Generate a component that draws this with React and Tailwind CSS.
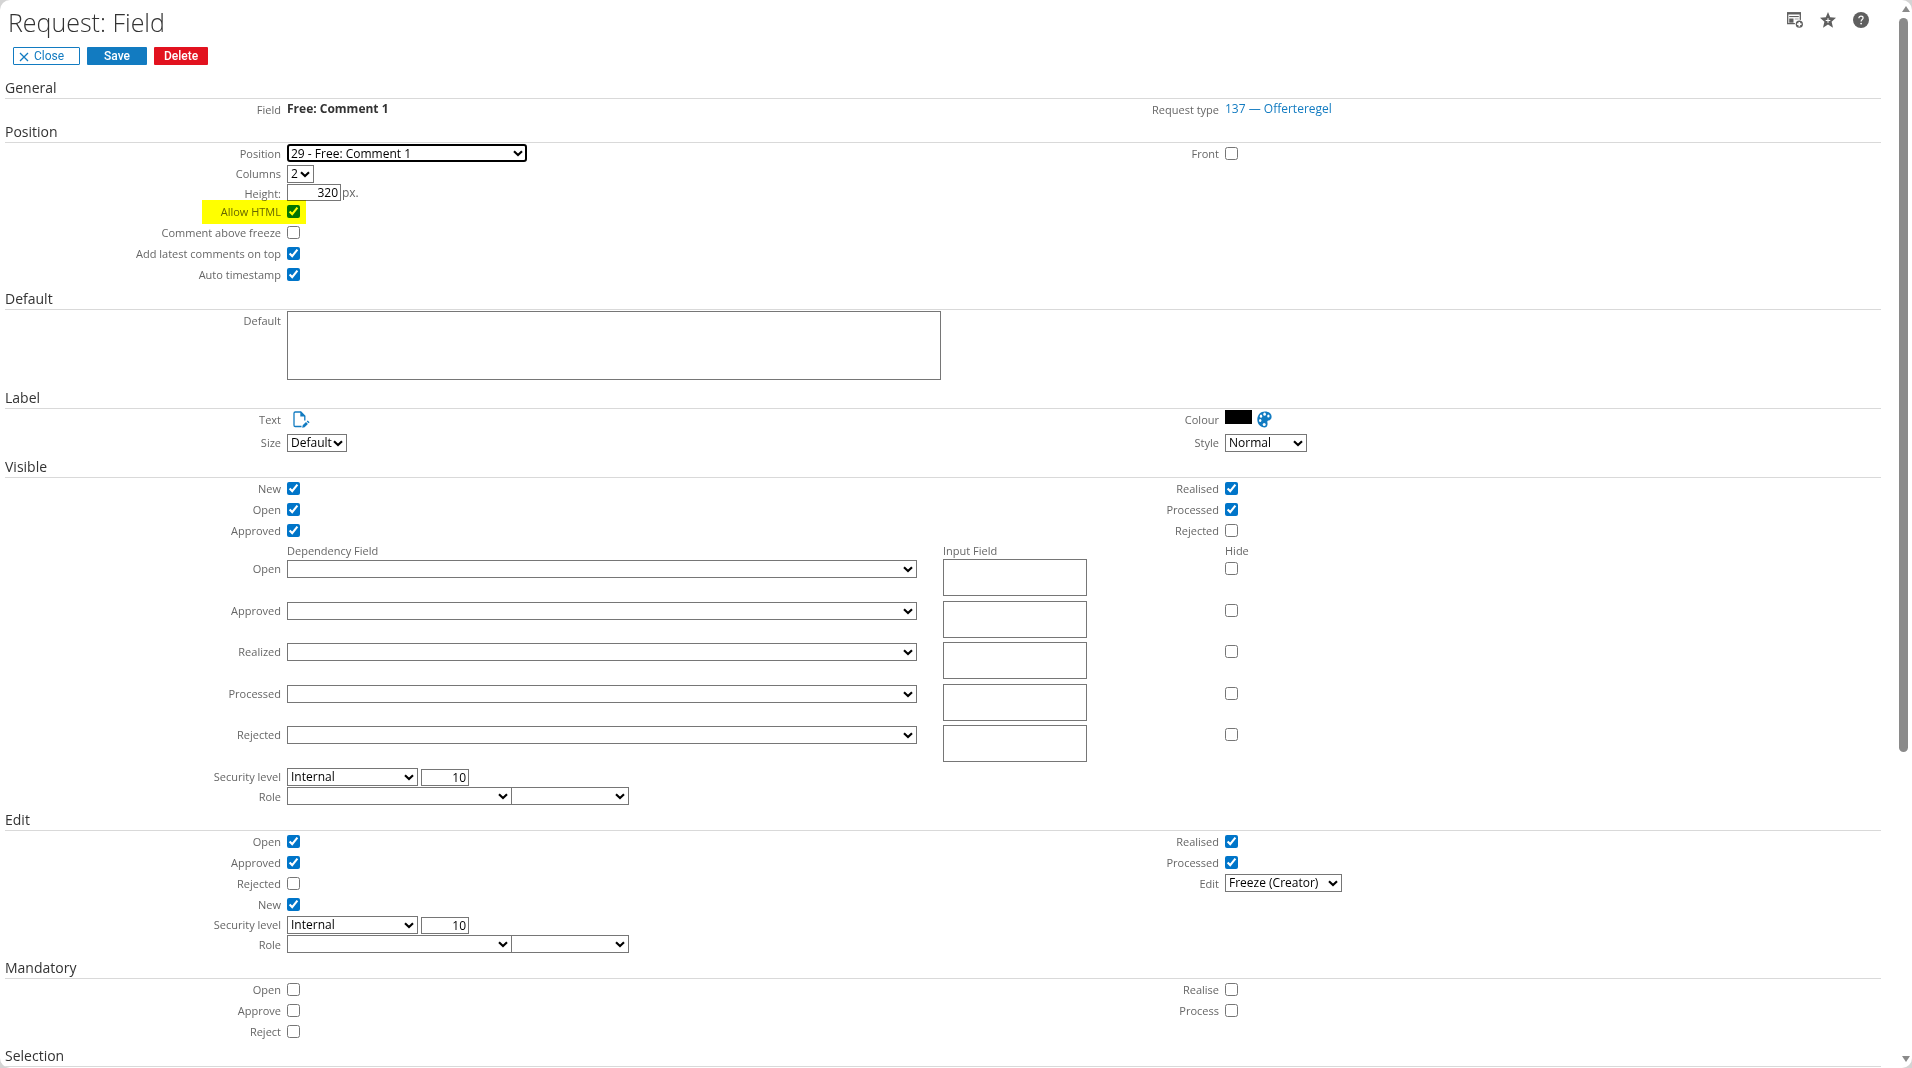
import React, { useId } from 'react';
import clsx from 'clsx';

const control = 'border border-[#767676] bg-white text-xs text-black outline-none';

function Section({ title, children }) {
  return (
    <section>
      <h2 className="h-[25px] border-b border-[#d9d9d9] pt-1 text-[14px] leading-5 text-[#333]">{title}</h2>
      {children}
    </section>
  );
}

function Columns({ children }) {
  return <div className="grid grid-cols-2 items-start">{children}</div>;
}

function Field({ label, id, size = 'h-[21px] leading-[21px]', highlight, children }) {
  return (
    <div className={clsx('relative grid grid-cols-[282px_1fr]', size)}>
      <label htmlFor={id} className="pr-1.5 text-right text-[11px] text-[#666]">
        {label}
      </label>
      <div className="flex items-start">{children}</div>
      {highlight && (
        <span className="pointer-events-none absolute -top-px left-[197px] h-6 w-[104px] bg-[#ffff00] mix-blend-multiply" />
      )}
    </div>
  );
}

function Check({ label, checked = false, highlight }) {
  const id = useId();
  return (
    <Field label={label} id={id} highlight={highlight}>
      <input id={id} type="checkbox" defaultChecked={checked} className="mt-1 size-[13px] accent-[#0075c9]" />
    </Field>
  );
}

function Select({ id, label, value = '', focused, className }) {
  return (
    <span className={clsx('relative flex h-[18px]', className)}>
      <select
        id={id}
        aria-label={label}
        defaultValue={value}
        className={clsx(
          'h-full w-full appearance-none bg-white text-xs leading-4 text-black outline-none',
          focused ? 'rounded-[3px] border-2 border-black pl-0.5' : 'border border-[#767676] pl-[3px]'
        )}
      >
        <option value={value}>{value}</option>
      </select>
      <svg viewBox="0 0 10 7" className="pointer-events-none absolute top-1.5 right-1 h-[7px] w-[10px]" aria-hidden="true">
        <path d="M1 1.2l4 3.9 4-3.9" fill="none" stroke="#000" strokeWidth="2.1" />
      </svg>
    </span>
  );
}

function Security() {
  const levelId = useId();
  const roleId = useId();
  return (
    <div>
      <Field label="Security level" id={levelId} size="h-5 leading-5">
        <div className="flex items-center gap-[3px] pt-px">
          <Select id={levelId} value="Internal" className="w-[131px]" />
          <input aria-label="Security level value" defaultValue="10" className={clsx(control, 'h-[17px] w-12 px-0.5 text-right')} />
        </div>
      </Field>
      <Field label="Role" id={roleId} size="h-[19px] leading-[19px]">
        <Select id={roleId} className="w-[225px]" />
        <Select label="Role level" className="-ml-px w-[118px]" />
      </Field>
    </div>
  );
}

function Dependency({ label }) {
  const id = useId();
  return (
    <div className="grid flex-1 grid-cols-2 items-start">
      <div className="grid grid-cols-[282px_1fr]">
        <label htmlFor={id} className="pr-1.5 text-right text-[11px] leading-5 text-[#666]">{label}</label>
        <Select id={id} className="mt-px mr-[26px]" />
      </div>
      <div className="grid grid-cols-[282px_1fr]">
        <textarea aria-label={`${label} input field`} className={clsx(control, 'h-[37px] w-36 resize-none')} />
        <input type="checkbox" aria-label={`${label} hide`} className="mt-[3px] size-[13px] accent-[#0075c9]" />
      </div>
    </div>
  );
}

function AddPanelIcon() {
  return (
    <svg viewBox="0 0 16 16" className="size-4" aria-hidden="true">
      <path d="M.7 1h12.600v10.600H.7z" fill="#fff" stroke="#5f5f5f" strokeWidth="1.3" />
      <path d="M0 .3h14v2.200H0z" fill="#5f5f5f" />
      <path d="M2.200 4h9.600v1.100H2.200z" fill="#5f5f5f" />
      <path d="M2.200 6.500h4.300v4.200H2.200z" fill="#5f5f5f" />
      <path d="M7.700 6.500h4v1h-4z" fill="#a0a0a0" />
      <circle cx="12.300" cy="12.200" r="4.500" fill="#fff" />
      <circle cx="12.300" cy="12.200" r="3.600" fill="#5f5f5f" />
      <path d="M12.300 10v4.400M10.100 12.200h4.400" stroke="#fff" strokeWidth="1.700" />
    </svg>
  );
}

function StarIcon() {
  return (
    <svg viewBox="0 0 16 16" className="size-4" aria-hidden="true">
      <path d="M8 0l2.200 5.300 5.800.5-4.400 3.900 1.400 6L8 12.600l-5 3.100 1.400-6L0 5.800l5.800-.5z" fill="#5f5f5f" />
      <path d="M8 6.200v4.600M5.700 8.500h4.600" stroke="#fff" strokeWidth="1.100" />
    </svg>
  );
}

function HelpIcon() {
  return (
    <svg viewBox="0 0 16 16" className="size-4" aria-hidden="true">
      <circle cx="8" cy="8" r="8" fill="#5f5f5f" />
      <path d="M5.900 6.200C5.900 4.900 6.800 4.200 8 4.200s2.100.7 2.100 1.800c0 1.500-2 1.600-2 3.400" fill="none" stroke="#fff" strokeWidth="1.200" />
      <circle cx="8.100" cy="11.600" r=".9" fill="#fff" />
    </svg>
  );
}

function EditTextIcon() {
  return (
    <svg viewBox="0 0 17 17" className="size-[17px]" aria-hidden="true">
      <path d="M8.500 15.500H2.200C1.400 15.500 1 15.100 1 14.300V2.200C1 1.400 1.400 1 2.200 1h5.600l4 4v4.500" fill="none" stroke="#127bc1" strokeWidth="1.300" />
      <path d="M7.300.6v5h5z" fill="#127bc1" />
      <path d="M9.200 16.700l.5-2.400 3.300-3.200 1.900 1.900-3.300 3.200zM13.700 10.400l1-1 1.900 1.900-1 1z" fill="#127bc1" />
    </svg>
  );
}

function PaletteIcon() {
  return (
    <svg viewBox="0 0 15 17" className="h-[17px] w-[15px]" aria-hidden="true">
      <path d="M8 .4c4 0 6.600 2.200 6.600 5.400 0 2.200-1.300 3.500-3.200 3.800-1 .2-1.300 1-1 2 .5 2-.1 4.900-2.700 4.900C3.200 16.500.3 13 .3 8.600.3 3.800 3.500.4 8 .4z" fill="#127bc1" />
      <ellipse cx="4" cy="5.200" rx="1.200" ry="1.600" fill="#fff" />
      <ellipse cx="7.600" cy="3.200" rx="1.300" ry="1.600" fill="#fff" />
      <ellipse cx="11.400" cy="5" rx="1.200" ry="1.600" fill="#fff" />
      <ellipse cx="3.200" cy="9.500" rx="1.200" ry="1.600" fill="#fff" />
      <circle cx="7.200" cy="13.400" r="1.500" fill="#fff" />
    </svg>
  );
}

function Header() {
  return (
    <header className="h-[74px] pt-[7px]">
      <div className="flex items-start justify-between pr-3 pl-[3px]">
        <h1 className="text-[25px] leading-[30px] font-light text-[#333]">Request: Field</h1>
        <div className="flex gap-[17px] pt-[5px]">
          <button type="button" aria-label="Add to dashboard"><AddPanelIcon /></button>
          <button type="button" aria-label="Add to favourites"><StarIcon /></button>
          <button type="button" aria-label="Help"><HelpIcon /></button>
        </div>
      </div>
      <div className="flex gap-[7px] pt-2.5 pl-2 font-[Roboto,sans-serif] text-xs">
        <button type="button" className="flex h-[18px] w-[67px] items-center gap-[5px] rounded-[1px] border border-[#127bc1] pl-[5px] text-[#127bc1]">
          <svg viewBox="0 0 10 10" className="mt-0.5 size-[10px]" aria-hidden="true">
            <path d="M1 1l8 8M9 1l-8 8" stroke="#127bc1" strokeWidth="1.300" />
          </svg>
          Close
        </button>
        <button type="button" className="h-[18px] w-[60px] rounded-[1px] bg-[#127bc1] font-medium text-white">Save</button>
        <button type="button" className="h-[18px] w-[54px] rounded-[1px] bg-[#e2121f] font-medium text-white">Delete</button>
      </div>
    </header>
  );
}

function Scrollbar() {
  return (
    <div className="flex w-[13px] shrink-0 flex-col items-center gap-1 pt-1.5 pb-1.5" aria-hidden="true">
      <svg viewBox="0 0 8 6" className="h-1.5 w-2"><path d="M4 0l4 6H0z" fill="#8a8a8a" /></svg>
      <div className="min-h-0 w-full flex-1 pt-0.5">
        <div className="h-[71%] w-[9px] rounded-full bg-[#8a8a8a]" />
      </div>
      <svg viewBox="0 0 8 6" className="h-1.5 w-2"><path d="M0 0h8L4 6z" fill="#8a8a8a" /></svg>
    </div>
  );
}

export default function App() {
  return (
    <div className="h-screen bg-[#d4d4d4] font-['Open_Sans',sans-serif]">
      <div className="flex h-full overflow-hidden rounded-[10px] bg-white">
        <main className="min-w-0 flex-1 overflow-y-auto pr-[18px] pl-[5px] [scrollbar-width:none]">
          <Header />

          <Section title="General">
            <Columns>
              <Field label="Field" size="h-[19px] leading-[21px]">
                <strong className="text-xs leading-[19px] text-[#333]">Free: Comment 1</strong>
              </Field>
              <Field label="Request type" size="h-[19px] leading-[21px]">
                <a href="#request-type" className="text-xs leading-[19px] text-[#127bc1]">137 — Offerteregel</a>
              </Field>
            </Columns>
          </Section>

          <Section title="Position">
            <Columns>
              <div>
                <Field label="Position" id="position">
                  <Select id="position" value="29 - Free: Comment 1" focused className="mt-px w-60" />
                </Field>
                <Field label="Columns" id="columns" size="h-5 leading-5">
                  <Select id="columns" value="2" className="mt-px w-[27px]" />
                </Field>
                <Field label="Height:" id="height" size="h-[17px] leading-5">
                  <input id="height" defaultValue="320" className={clsx(control, 'h-[17px] w-[54px] px-0.5 text-right')} />
                  <span className="pl-px text-xs leading-[17px] text-[#666]">px.</span>
                </Field>
                <Check label="Allow HTML" checked highlight />
                <Check label="Comment above freeze" />
                <Check label="Add latest comments on top" checked />
                <Check label="Auto timestamp" checked />
              </div>
              <Check label="Front" />
            </Columns>
          </Section>

          <Section title="Default">
            <Field label="Default" id="default" size="h-[74px] leading-[21px]">
              <textarea id="default" className={clsx(control, 'mt-px h-[69px] w-[654px] resize-none')} />
            </Field>
          </Section>

          <Section title="Label">
            <Columns>
              <div>
                <Field label="Text" id="label-text" size="h-6 leading-[21px]">
                  <button id="label-text" type="button" className="mt-0.5 ml-1.5"><EditTextIcon /></button>
                </Field>
                <Field label="Size" id="label-size" size="h-5 leading-5">
                  <Select id="label-size" value="Default" className="mt-px w-[60px]" />
                </Field>
              </div>
              <div>
                <Field label="Colour" id="label-colour" size="h-6 leading-[21px]">
                  <span className="mt-px h-3.5 w-[27px] bg-black" />
                  <button id="label-colour" type="button" className="mt-0.5 ml-[5px]"><PaletteIcon /></button>
                </Field>
                <Field label="Style" id="label-style" size="h-5 leading-5">
                  <Select id="label-style" value="Normal" className="mt-px w-[82px]" />
                </Field>
              </div>
            </Columns>
          </Section>

          <Section title="Visible">
            <Columns>
              <div>
                <Check label="New" checked />
                <Check label="Open" checked />
                <Check label="Approved" checked />
              </div>
              <div>
                <Check label="Realised" checked />
                <Check label="Processed" checked />
                <Check label="Rejected" />
              </div>
            </Columns>
            <div className="grid h-[18px] grid-cols-2 text-[11px] leading-5 text-[#666]">
              <span className="pl-[282px]">Dependency Field</span>
              <div className="grid grid-cols-[282px_1fr]">
                <span>Input Field</span>
                <span>Hide</span>
              </div>
            </div>
            <div className="flex h-[208px] flex-col">
              <Dependency label="Open" />
              <Dependency label="Approved" />
              <Dependency label="Realized" />
              <Dependency label="Processed" />
              <Dependency label="Rejected" />
            </div>
            <Security />
          </Section>

          <Section title="Edit">
            <Columns>
              <div>
                <Check label="Open" checked />
                <Check label="Approved" checked />
                <Check label="Rejected" />
                <Check label="New" checked />
              </div>
              <div>
                <Check label="Realised" checked />
                <Check label="Processed" checked />
                <Field label="Edit" id="edit-mode">
                  <Select id="edit-mode" value="Freeze (Creator)" className="mt-px w-[117px]" />
                </Field>
              </div>
            </Columns>
            <Security />
          </Section>

          <Section title="Mandatory">
            <Columns>
              <div>
                <Check label="Open" />
                <Check label="Approve" />
                <Check label="Reject" />
              </div>
              <div>
                <Check label="Realise" />
                <Check label="Process" />
              </div>
            </Columns>
          </Section>

          <Section title="Selection" />
        </main>
        <Scrollbar />
      </div>
    </div>
  );
}
